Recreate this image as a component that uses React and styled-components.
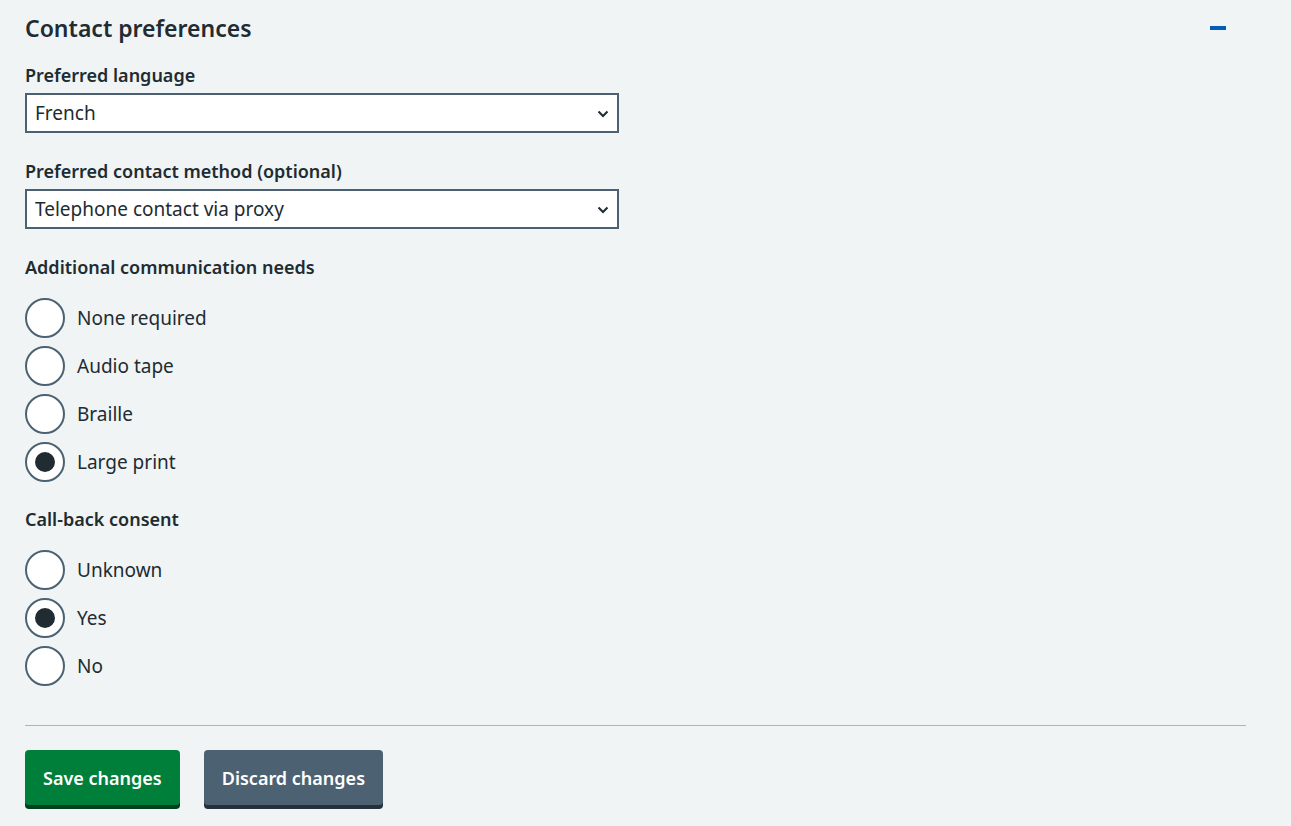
import styled, { createGlobalStyle } from 'styled-components';
import { useState } from 'react';

const GlobalStyle = createGlobalStyle`
  body {
    margin: 0;
    background: #f0f4f5;
    color: #212b32;
    font-family: 'Noto Sans', 'Open Sans', Arial, sans-serif;
  }
`;

const needsOptions = ['None required', 'Audio tape', 'Braille', 'Large print'];
const consentOptions = ['Unknown', 'Yes', 'No'];

function RadioGroup({ name, options, value, onChange }) {
  return (
    <RadioList>
      {options.map(opt => (
        <RadioRow key={opt}>
          <RadioInput
            type="radio"
            name={name}
            checked={value === opt}
            onChange={() => onChange(opt)}
          />
          <RadioLabel>{opt}</RadioLabel>
        </RadioRow>
      ))}
    </RadioList>
  );
}

function App() {
  const [needs, setNeeds] = useState('Large print');
  const [consent, setConsent] = useState('Yes');

  return (
    <>
      <GlobalStyle />
      <Section>
        <Header>
          <Title>Contact preferences</Title>
          <CollapseButton aria-label="Collapse" />
        </Header>

        <Field>
          <Label>Preferred language</Label>
          <SelectWrap>
            <Select defaultValue="French">
              <option>English</option>
              <option>French</option>
              <option>Welsh</option>
            </Select>
            <Chevron viewBox="0 0 12 8">
              <path d="M1.5 1.5 L6 6 L10.5 1.5" fill="none" stroke="#212b32" strokeWidth="2" />
            </Chevron>
          </SelectWrap>
        </Field>

        <Field>
          <Label>Preferred contact method (optional)</Label>
          <SelectWrap>
            <Select defaultValue="Telephone contact via proxy">
              <option>Email</option>
              <option>Letter</option>
              <option>Telephone contact via proxy</option>
            </Select>
            <Chevron viewBox="0 0 12 8">
              <path d="M1.5 1.5 L6 6 L10.5 1.5" fill="none" stroke="#212b32" strokeWidth="2" />
            </Chevron>
          </SelectWrap>
        </Field>

        <Field $after={25}>
          <Label $gap={19}>Additional communication needs</Label>
          <RadioGroup name="needs" options={needsOptions} value={needs} onChange={setNeeds} />
        </Field>

        <Field>
          <Label $gap={19}>Call-back consent</Label>
          <RadioGroup name="consent" options={consentOptions} value={consent} onChange={setConsent} />
        </Field>

        <Divider />

        <Actions>
          <Button $variant="primary">Save changes</Button>
          <Button $variant="secondary">Discard changes</Button>
        </Actions>
      </Section>
    </>
  );
}

export default App;

const Section = styled.div`
  padding: 12px 45px 16px 25px;
`;

const Header = styled.div`
  display: flex;
  justify-content: space-between;
  align-items: center;
  padding-right: 20px;
  margin-bottom: 19px;
`;

const Title = styled.h2`
  margin: 0;
  font-size: 23px;
  line-height: 32px;
  font-weight: 600;
`;

const CollapseButton = styled.button`
  all: unset;
  width: 16px;
  height: 4px;
  background: #005eb8;
  cursor: pointer;
`;

const Field = styled.div`
  margin-bottom: ${p => p.$after ?? 26}px;
`;

const Label = styled.div`
  font-size: 18px;
  font-weight: 600;
  line-height: 24px;
  margin-bottom: ${p => (p.$gap ? p.$gap : 6)}px;
`;

const SelectWrap = styled.div`
  position: relative;
  width: 594px;
`;

const Select = styled.select`
  appearance: none;
  width: 100%;
  height: 40px;
  box-sizing: border-box;
  border: 2px solid #4c6272;
  border-radius: 0;
  background: #ffffff;
  padding: 0 40px 0 8px;
  font-family: inherit;
  font-size: 19px;
  color: #212b32;
`;

const Chevron = styled.svg`
  position: absolute;
  right: 10px;
  top: 17px;
  width: 12px;
  height: 8px;
  pointer-events: none;
`;

const RadioList = styled.div`
  display: flex;
  flex-direction: column;
  gap: 8px;
`;

const RadioRow = styled.label`
  display: flex;
  align-items: center;
  gap: 12px;
  cursor: pointer;
`;

const RadioInput = styled.input`
  appearance: none;
  margin: 0;
  width: 40px;
  height: 40px;
  box-sizing: border-box;
  border: 2px solid #4c6272;
  border-radius: 50%;
  background: #ffffff;
  position: relative;
  cursor: pointer;

  &:checked::after {
    content: '';
    position: absolute;
    left: 8px;
    top: 8px;
    width: 20px;
    height: 20px;
    border-radius: 50%;
    background: #212b32;
  }
`;

const RadioLabel = styled.span`
  font-size: 19px;
  line-height: 24px;
`;

const Divider = styled.hr`
  border: 0;
  border-top: 1px solid #b1b4b6;
  margin: 39px 0 24px 0;
`;

const Actions = styled.div`
  display: flex;
  gap: 24px;
`;

const Button = styled.button`
  border: 0;
  border-radius: 4px;
  height: 55px;
  padding: 0 18px;
  font-family: inherit;
  font-size: 18px;
  font-weight: 600;
  color: #ffffff;
  cursor: pointer;
  background: ${p => (p.$variant === 'primary' ? '#007f3b' : '#4c6272')};
  box-shadow: 0 4px 0 ${p => (p.$variant === 'primary' ? '#00401e' : '#263139')};
`;
